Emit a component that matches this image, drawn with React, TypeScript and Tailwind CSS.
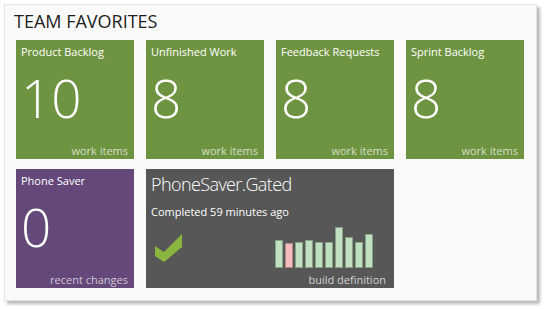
type Favorite = {
  title: string;
  count: number;
  label: string;
  color: string;
};

const favorites: Favorite[] = [
  { title: "Product Backlog", count: 10, label: "work items", color: "bg-[#6f9441]" },
  { title: "Unfinished Work", count: 8, label: "work items", color: "bg-[#6f9441]" },
  { title: "Feedback Requests", count: 8, label: "work items", color: "bg-[#6f9441]" },
  { title: "Sprint Backlog", count: 8, label: "work items", color: "bg-[#6f9441]" },
];

// recent builds, height in px, failed ones are pink
const builds = [
  { h: 27, ok: true },
  { h: 24, ok: false },
  { h: 25, ok: true },
  { h: 27, ok: true },
  { h: 25, ok: true },
  { h: 25, ok: true },
  { h: 40, ok: true },
  { h: 30, ok: true },
  { h: 25, ok: true },
  { h: 33, ok: true },
];

function CountTile({ title, count, label, color }: Favorite) {
  return (
    <div className={`flex h-[119px] w-[118px] flex-col px-[5px] text-white ${color}`}>
      <div className="mt-[4px] text-[11px] font-medium leading-[16px]">{title}</div>
      <div className="mt-[11px] text-[53px] font-light leading-[53px]">{count}</div>
      <div className="mt-auto pr-[1px] text-right text-[11px] leading-[16px] text-white/70">
        {label}
      </div>
    </div>
  );
}

function BuildChart() {
  const base = 42;
  return (
    <svg width="100" height="44" viewBox="0 0 100 44">
      {builds.map((b, i) => (
        <rect
          key={i}
          x={i * 10 + 0.5}
          y={base - b.h + 0.5}
          width={7}
          height={b.h}
          fill={b.ok ? "#c1e0c1" : "#f6bcbc"}
          stroke={b.ok ? "#86a386" : "#a88a8a"}
          strokeWidth={1}
        />
      ))}
    </svg>
  );
}

function BuildTile() {
  return (
    <div className="col-span-2 flex h-[119px] flex-col bg-[#575757] px-[5px] text-white">
      <div className="mt-[2px] text-[18px] font-light leading-[26px] tracking-[-0.6px]">
        PhoneSaver.Gated
      </div>
      <div className="mt-[7px] text-[11px] font-medium leading-[16px]">Completed 59 minutes ago</div>
      <div className="mt-[5px] flex items-end justify-between pl-[4px] pr-[14px]">
        <svg width="28" height="30" viewBox="0 0 28 30" className="mb-[6px]">
          <polygon points="0,13 9,19 27,1 27,14 9,29 0,23" fill="#8bb53f" />
        </svg>
        <BuildChart />
      </div>
      <div className="mt-auto pr-[3px] text-right text-[11px] leading-[16px] text-[#d0d0d0]">
        build definition
      </div>
    </div>
  );
}

export default function App() {
  return (
    <div className="h-[309px] w-[545px] bg-white p-[4px] font-['Open_Sans',sans-serif]">
      <div className="h-[297px] w-[533px] border border-[#e3e3e3] bg-[#fafafa] shadow-[3px_3px_3px_rgba(0,0,0,0.28)]">
        <h1 className="ml-[9px] mt-[4px] text-[18px] leading-[24px] text-[#1e1e1e]">TEAM FAVORITES</h1>
        <div className="ml-[11px] mt-[7px] grid grid-cols-[repeat(4,118px)] gap-x-[12px] gap-y-[10px]">
          {favorites.map((f) => (
            <CountTile key={f.title} {...f} />
          ))}
          <CountTile title="Phone Saver" count={0} label="recent changes" color="bg-[#634879]" />
          <BuildTile />
        </div>
      </div>
    </div>
  );
}
